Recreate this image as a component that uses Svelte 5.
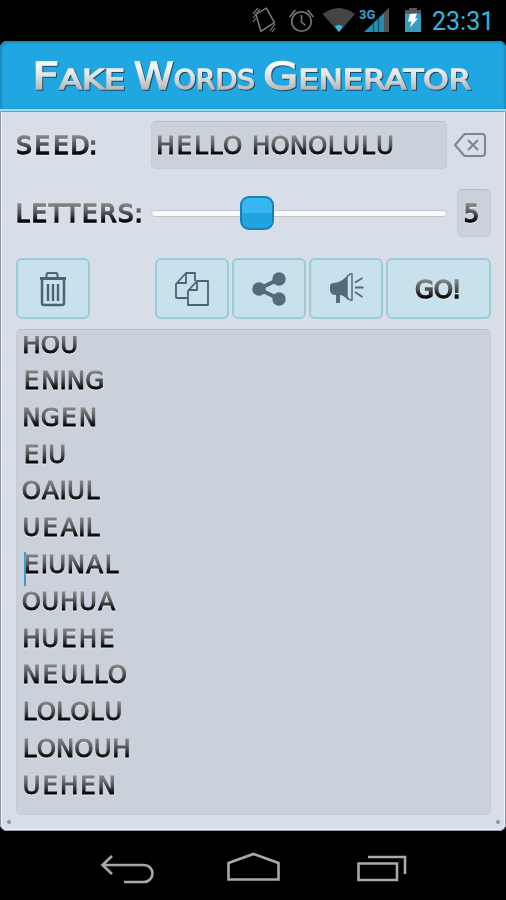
<script lang="ts">
  let seed = $state("HELLO HONOLULU");
  let letters = $state(5);

  const words = [
    "HOU",
    "ENING",
    "NGEN",
    "EIU",
    "OAIUL",
    "UEAIL",
    "EIUNAL",
    "OUHUA",
    "HUEHE",
    "NEULLO",
    "LOLOLU",
    "LONOUH",
    "UEHEN",
  ];

  // Cell widths of the display lettering, everything else is 15 wide.
  const widths: Record<string, number> = {
    I: 3,
    L: 11,
    T: 12,
    R: 14,
    S: 14,
    ":": 4,
    "!": 4,
    " ": 6,
  };
  const GAP = 3.8;

  function centers(text: string): string {
    let x = 1;
    return [...text]
      .map((ch) => {
        const w = widths[ch] ?? 15;
        const mid = x + w / 2;
        x += w + GAP;
        return mid.toFixed(1);
      })
      .join(" ");
  }

  function textWidth(text: string): number {
    return [...text].reduce((sum, ch) => sum + (widths[ch] ?? 15) + GAP, 2);
  }
</script>

{#snippet lettering(text: string, bold: boolean)}
  <svg class="lettering" class:bold width={textWidth(text)} height="24">
    <text x={centers(text)} y="21" fill="url(#ink)">{text}</text>
  </svg>
{/snippet}

<div class="phone">
  <svg class="defs" width="0" height="0">
    <defs>
      <linearGradient id="ink" gradientUnits="userSpaceOnUse" x1="0" y1="3" x2="0" y2="21">
        <stop offset="0" stop-color="#858585" />
        <stop offset=".5" stop-color="#505356" />
        <stop offset="1" stop-color="#000" />
      </linearGradient>
      <linearGradient id="chrome" gradientUnits="userSpaceOnUse" x1="0" y1="20" x2="0" y2="49">
        <stop offset="0" stop-color="#fff" />
        <stop offset=".5" stop-color="#e2e2e2" />
        <stop offset="1" stop-color="#b5b5b5" />
      </linearGradient>
    </defs>
  </svg>

  <div class="status">
    <svg width="250" height="41" viewBox="0 0 250 41">
      <g fill="none" stroke="#777" stroke-width="1.6">
        <path d="m4 20 5-11 15 7-6 15Z" transform="rotate(36 14 20)" stroke-linejoin="round" />
        <path d="m3 14 5-6M3 18l7-9M3 22l3-4M20 31l5-7M22 32l3-4" stroke-width="1.200" />
        <circle cx="51.500" cy="21.500" r="9.800" />
        <path d="M51.500 15v7l4 3.500M39.500 17l6-7M63.500 17l-6-7" />
      </g>
      <path d="M72.500 14Q89 2 105 14L89 32.500Z" fill="#444" />
      <path d="M85 26.500q4-3.500 8 0L89 32Z" fill="#33b5e5" />
      <text class="threeg" x="109" y="19">3G</text>
      <path d="M114 32 139 8V32Z" fill="#278bb1" />
      <path d="M134 13 139 8v24h-5Z" fill="#525252" />
      <path d="M123.500 23v9M128.500 18v14" stroke="#0c5269" stroke-width="1.300" />
      <path d="M155 12h16v20h-16Z" fill="#379bbd" />
      <path d="M155 13.500V10h4V8h8v2h4v3.500Z" fill="#555" />
      <path d="m160 14 7-.5-2 5h3l-8 9 1.500-6H158Z" fill="#fff" />
    </svg>
    <span class="clock">23:31</span>
  </div>

  <main>
    <header>
      <svg width="506" height="68">
        <g class="title">
          <text x="32" y="48" textLength="93" lengthAdjust="spacingAndGlyphs">Fake</text>
          <text x="134" y="48" textLength="121" lengthAdjust="spacingAndGlyphs">Words</text>
          <text x="263" y="48" textLength="208" lengthAdjust="spacingAndGlyphs">Generator</text>
        </g>
      </svg>
    </header>

    <div class="body">
      <div class="row seed">
        <div class="label">{@render lettering("SEED:", true)}</div>
        <div class="field">{@render lettering(seed, false)}</div>
        <svg class="erase" width="34" height="28" viewBox="0 0 34 28" fill="none" stroke="#7d868d" stroke-width="2">
          <path d="M2 14 11.500 3H29q3 0 3 3v16q0 3-3 3H11.500Z" stroke-linejoin="round" />
          <path d="m15 9 10 10M25 9 15 19" />
        </svg>
      </div>

      <div class="row letters">
        <div class="label">{@render lettering("LETTERS:", true)}</div>
        <div class="slider"><div class="thumb"></div></div>
        <div class="count">{@render lettering(String(letters), true)}</div>
      </div>

      <div class="row buttons">
        <button class="trash" aria-label="Clear">
          <svg width="32" height="40" viewBox="0 0 32 40" fill="none" stroke="#4d6371" stroke-width="2">
            <path d="M9.500 8V6q0-2 2-2h7q2 0 2 2v2" />
            <path d="M3 9.500h26" stroke-width="3" />
            <path d="M5 10v24q0 2 2 2h18q2 0 2-2V10" stroke-width="2.500" />
            <path d="M11 15v17M16 15v17M21 15v17" stroke-width="2.400" />
          </svg>
        </button>
        <button aria-label="Copy">
          <svg width="38" height="40" viewBox="0 0 38 40" fill="none" stroke="#4d6371" stroke-width="1.800" stroke-linejoin="round">
            <path d="M14 29H4q-1 0-1-1V15L13 4h9v8M4 14h9V4" />
            <path d="M24 12h11v24H15V22Zm0 0v9h-9" />
          </svg>
        </button>
        <button aria-label="Share">
          <svg width="36" height="40" viewBox="0 0 36 40" fill="#536b7b">
            <path d="M28 10 8 20l20 10" fill="none" stroke="#536b7b" stroke-width="4" />
            <circle cx="8" cy="20" r="6.800" />
            <circle cx="28" cy="10" r="6.700" />
            <circle cx="28" cy="30" r="6.700" />
          </svg>
        </button>
        <button aria-label="Announce">
          <svg width="38" height="40" viewBox="0 0 38 40">
            <path d="M3 17q0-3 4-3 8-1 14-8v25q-5-5-8-5v8H9v-8Q3 26 3 21Z" fill="#536b7b" />
            <path d="M20 8q3-4 5-3v26q-2 1-5-3Z" fill="#cfe2ee" stroke="#536b7b" stroke-width="1.500" />
            <path d="M28 13.500 35.500 9M28 18.500h8.500M28 23l7.500 5" stroke="#536b7b" stroke-width="1.800" />
          </svg>
        </button>
        <button class="go">{@render lettering("GO!", true)}</button>
      </div>

      <div class="output">
        {#each words as word, i}
          <div class="word" class:current={i === 6}>
            {@render lettering(word, false)}
          </div>
        {/each}
      </div>
    </div>
  </main>

  <nav>
    <svg width="506" height="68" viewBox="0 0 506 68" fill="none" stroke="#a9a9a9" stroke-width="2.600">
      <path d="M103 33h41a8.500 8.500 0 0 1 0 17h-20M112 24l-9.500 9 9.500 9" />
      <path d="M228.500 31 253.500 22 278.500 31V47.500h-50Z" />
      <path d="M358.500 31.500H397V48h-38.500ZM368 25h37v17" />
    </svg>
  </nav>
</div>

<style>
  :global(body) {
    background: #000;
  }

  .phone {
    display: flex;
    flex-direction: column;
    width: 506px;
    height: 900px;
    overflow: hidden;
    background: #000;
    font-family: Roboto, sans-serif;
  }

  svg {
    display: block;
    flex: none;
  }

  .defs {
    position: absolute;
  }

  .status {
    display: flex;
    height: 41px;
    padding-left: 250px;
  }

  .status svg {
    margin-right: -68px;
  }

  .threeg {
    font-size: 13px;
    font-weight: 700;
    fill: #33a5cc;
  }

  .clock {
    font-size: 25px;
    line-height: 43px;
    color: #33b5e5;
  }

  main {
    display: flex;
    flex-direction: column;
    box-sizing: border-box;
    height: 790px;
    border-radius: 7px;
    overflow: hidden;
    background: #d7dee8;
  }

  header {
    height: 68px;
    background: #20a7e2;
    border-bottom: 2px solid #a4dcf6;
    border-radius: 7px 7px 0 0;
    box-shadow: inset 2px 2px 2px #188cc0, inset -2px 0 2px #188cc0;
  }

  .title {
    font-family: "DejaVu Sans", sans-serif;
    font-size: 37px;
    font-variant: small-caps;
    fill: url(#chrome);
    stroke: url(#chrome);
    stroke-width: 1.4;
    filter: drop-shadow(1.5px 1.5px 0.5px #164d68);
  }

  .body {
    flex: 1;
    box-sizing: border-box;
    padding: 10px 13px 14px 14px;
    border: solid #edf4fd;
    border-width: 0 2px 2px;
    outline: 1px solid #8995a2;
    outline-offset: -1px;
    border-radius: 0 0 7px 7px;
    background:
      radial-gradient(circle at 7px 711px, #8e98a1 1.5px, transparent 2.5px),
      radial-gradient(circle at 496px 711px, #8e98a1 1.5px, transparent 2.5px),
      #d7dee8;
  }

  .lettering {
    overflow: visible;
    font-family: "DejaVu Sans", sans-serif;
    font-size: 24.5px;
    text-anchor: middle;
    filter: drop-shadow(0 1px 0 #e6ebf0);
  }

  .lettering text {
    stroke: url(#ink);
    stroke-width: 1;
  }

  .lettering.bold text {
    stroke-width: 1.5;
  }

  .row {
    display: flex;
    align-items: center;
  }

  .seed {
    height: 48px;
  }

  .label {
    width: 135px;
  }

  .field,
  .count,
  .output {
    box-sizing: border-box;
    background: #cad1da;
    border: 1px solid #c5ccd5;
    border-top-color: #b6bec7;
    border-radius: 5px;
  }

  .field {
    display: flex;
    align-items: center;
    width: 296px;
    height: 48px;
    padding-left: 5px;
  }

  .erase {
    margin-left: 6px;
  }

  .letters {
    height: 48px;
    margin-top: 20px;
  }

  .slider {
    display: flex;
    align-items: center;
    box-sizing: border-box;
    width: 296px;
    height: 7px;
    padding-left: 88px;
    background: #fcfcfc;
    border: 1px solid #c2c6cb;
    border-radius: 4px;
  }

  .thumb {
    box-sizing: border-box;
    flex: none;
    width: 34px;
    height: 34px;
    background: linear-gradient(#38b6ef 50%, #20a4df 50%);
    border: 2px solid #1681b8;
    border-radius: 9px;
  }

  .count {
    display: flex;
    align-items: center;
    width: 34px;
    height: 48px;
    margin-left: 10px;
    padding-left: 5px;
  }

  .buttons {
    gap: 3px;
    margin-top: 21px;
  }

  button {
    display: flex;
    align-items: center;
    justify-content: center;
    box-sizing: border-box;
    width: 74px;
    height: 61px;
    padding: 0;
    background: #c9e1ed;
    border: 2px solid #9bcbd7;
    border-radius: 6px;
    box-shadow: inset 0 0 3px #b5e7f0;
  }

  .trash {
    margin-right: 62px;
  }

  .go {
    width: 105px;
    padding-left: 3px;
  }

  .output {
    height: 486px;
    margin-top: 10px;
    overflow: hidden;
    padding: 6px 0 0 6px;
  }

  .word {
    height: 36.8px;
  }

  /* First line is scrolled partly out of view. */
  .word:first-child {
    height: 32px;
    overflow: hidden;
  }

  .word:first-child :global(svg) {
    margin-top: -4px;
  }

  .current {
    position: relative;
  }

  .current::before {
    content: "";
    position: absolute;
    left: 1px;
    top: 0;
    width: 2px;
    height: 34px;
    background: #3a9dce;
  }

  nav {
    height: 68px;
    margin-top: 1px;
  }
</style>
